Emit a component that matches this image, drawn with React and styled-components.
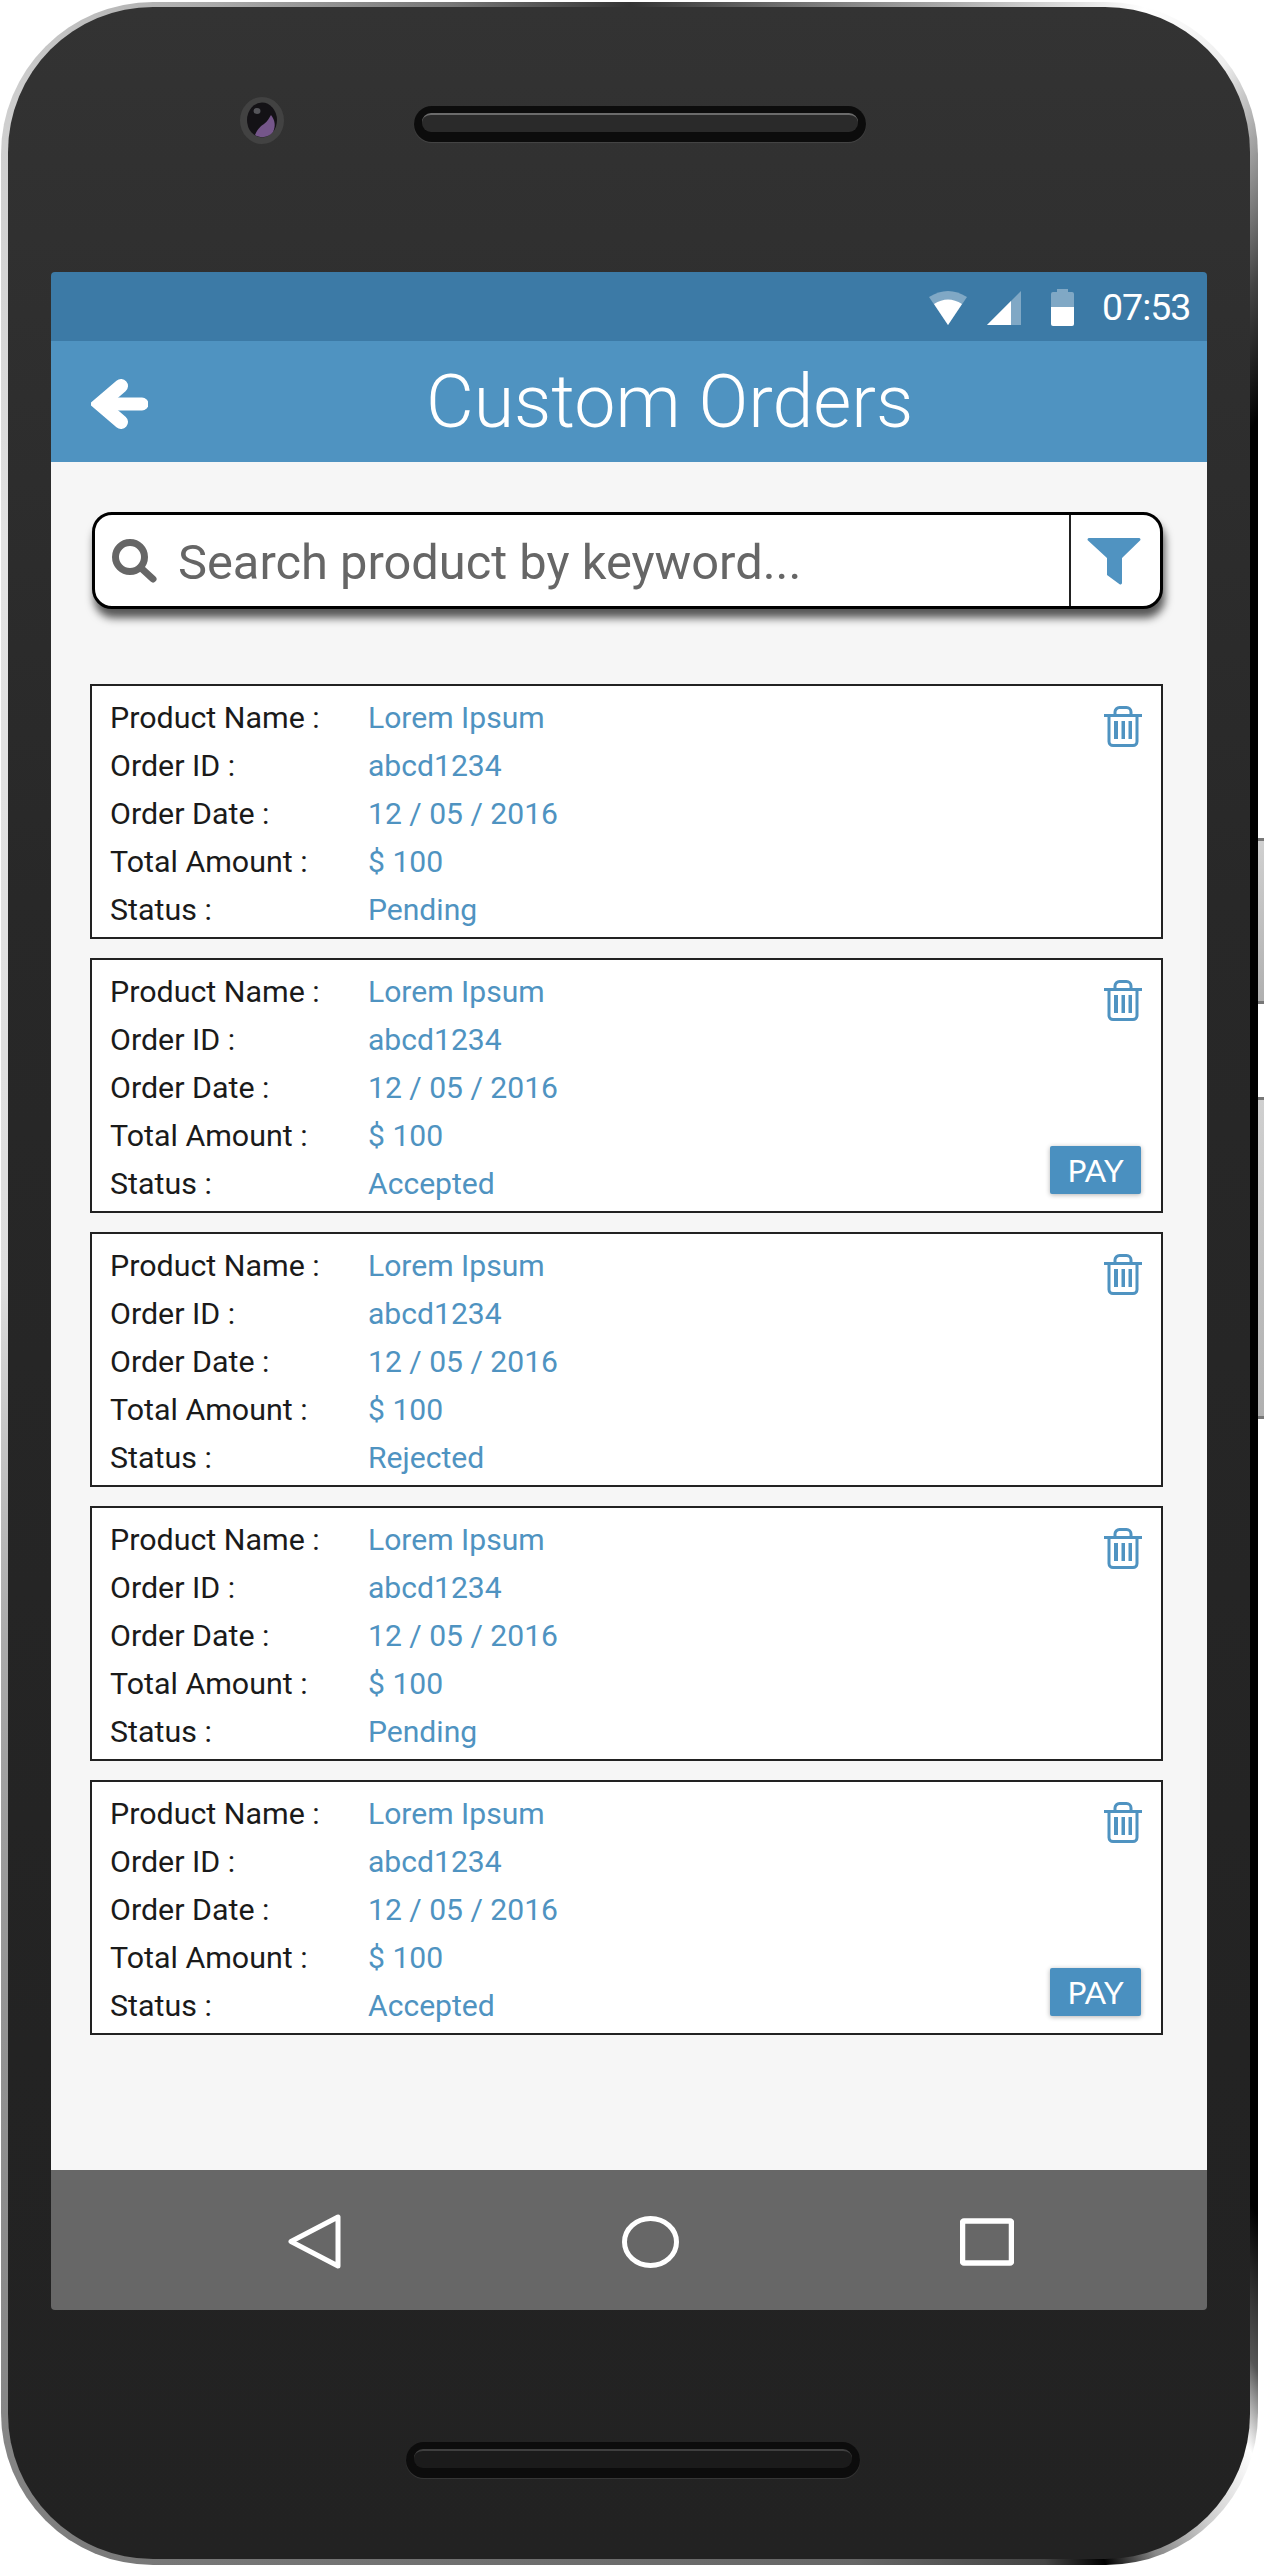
import React from "react";
import styled, { createGlobalStyle } from "styled-components";

const Global = createGlobalStyle`
  html, body { margin: 0; padding: 0; background: #fff; }
  body { font-family: Roboto, "Liberation Sans", sans-serif; }
  #root { width: 1264px; height: 2573px; overflow: hidden; }
`;

const Page = styled.div`
  padding: 2px 0 0 1px;
`;

const Frame = styled.div`
  position: relative;
  width: 1257px;
  height: 2563px;
  box-sizing: border-box;
  padding: 5px 8px 6px 7px;
  border-radius: 152px;
  background: conic-gradient(
    #333 0deg, #555 4deg, #aaa 14deg, #fff 22deg, #eee 26deg, #999 29deg, #444 32deg, #000 36deg,
    #000 146deg, #555 150deg, #fff 152deg, #ccc 155deg, #888 157.5deg, #000 159.6deg, #444 162deg,
    #666 170deg, #777 200deg, #888 210deg, #aaa 240deg, #ddd 270deg, #e2e2e2 320deg, #ccc 333deg,
    #aaa 342deg, #777 352deg, #333 360deg
  );
`;

const SideKey = styled.div`
  position: absolute;
  left: 100%;
  top: ${(p) => p.$top}px;
  width: 6px;
  height: ${(p) => p.$height}px;
  background: linear-gradient(#d0d0d0, #b0b0b0);
  border-top: 3px solid #777;
  border-bottom: 3px solid #777;
`;

const Body = styled.div`
  height: 100%;
  display: flex;
  flex-direction: column;
  border-radius: 145px;
  background: linear-gradient(#333 0%, #2f2f2f 12%, #282828 35%, #232323 80%, #222 100%);
`;

const TopBezel = styled.div`
  height: 265px;
  box-sizing: border-box;
  flex: none;
  display: flex;
  align-items: flex-start;
  padding: 90px 0 0 232px;
  gap: 130px;
`;

const Camera = styled.svg`
  width: 44px;
  height: 47px;
  flex: none;
`;

const Speaker = styled.div`
  width: ${(p) => p.$width}px;
  height: 36px;
  flex: none;
  box-sizing: border-box;
  margin-top: 9px;
  padding: 7px 8px 10px;
  border-radius: 18px;
  background: #0c0c0c;
  box-shadow: 0 1px 1px rgba(255, 255, 255, 0.1);
`;

const SpeakerGrille = styled.div`
  height: 100%;
  box-sizing: border-box;
  border-radius: 9px;
  background: ${(p) => (p.$dim ? "#1b1b1b" : "#2a2a2a")};
  border-top: 2px solid ${(p) => (p.$dim ? "#3f3f3f" : "#6b6b6b")};
`;

const Screen = styled.div`
  flex: none;
  margin: 0 43px 0 43px;
  border-radius: 4px;
  overflow: hidden;
  display: flex;
  flex-direction: column;
`;

const StatusBar = styled.div`
  height: 69px;
  display: flex;
  align-items: center;
  justify-content: flex-end;
  padding-right: 17px;
  background: #3c7aa6;
  color: #fff;
`;

const StatusIcon = styled.svg`
  flex: none;
  margin-right: ${(p) => p.$gap}px;
  margin-top: 2px;
`;

const Clock = styled.span`
  font-size: 37.5px;
  letter-spacing: -1px;
  line-height: 1;
  width: 88px;
  white-space: nowrap;
  margin-top: 2px;
`;

const AppBar = styled.div`
  height: 121px;
  display: flex;
  align-items: center;
  padding-left: 40px;
  background: #4f93c1;
  color: #fff;
`;

const BackArrow = styled.svg`
  width: 57px;
  height: 52px;
  flex: none;
  margin-top: 4px;
`;

const Title = styled.h1`
  margin: 2px 0 0 278px;
  font-size: 73.5px;
  font-weight: 300;
  line-height: 1;
  white-space: nowrap;
`;

const Content = styled.div`
  height: 1708px;
  box-sizing: border-box;
  padding: 50px 44px 0 39px;
  background: #f6f6f6;
`;

const SearchBar = styled.div`
  height: 97px;
  margin-left: 2px;
  box-sizing: border-box;
  display: flex;
  align-items: center;
  border: 3px solid #000;
  border-radius: 20px;
  background: #fff;
  box-shadow: 2px 9px 9px rgba(0, 0, 0, 0.65);
`;

const SearchIcon = styled.svg`
  width: 45px;
  height: 44px;
  flex: none;
  margin-left: 17px;
`;

const SearchText = styled.div`
  flex: 1;
  margin: 3px 0 0 21px;
  font-size: 48.8px;
  color: #666;
  white-space: nowrap;
`;

const FilterCell = styled.div`
  width: 91px;
  align-self: stretch;
  flex: none;
  box-sizing: border-box;
  border-left: 2px solid #222;
  display: flex;
  align-items: center;
  padding-left: 16px;
`;

const FilterIcon = styled.svg`
  width: 54px;
  height: 47px;
  margin-top: 2px;
`;

const OrderList = styled.div`
  margin-top: 75px;
  display: flex;
  flex-direction: column;
  gap: 19px;
`;

const OrderCard = styled.div`
  height: 255px;
  box-sizing: border-box;
  display: flex;
  justify-content: space-between;
  border: 2px solid #222;
  background: #fff;
  padding: 7px 19px 17px 18px;
`;

const Fields = styled.div`
  display: grid;
  grid-template-columns: 258px auto;
  grid-auto-rows: 48px;
  align-items: center;
  align-content: start;
  font-size: 30.1px;
`;

const Label = styled.div`
  color: #1a1a1a;
  font-size: 30.4px;
  white-space: nowrap;
`;

const Value = styled.div`
  color: #4f93c1;
  white-space: nowrap;
`;

const Actions = styled.div`
  display: flex;
  flex-direction: column;
  justify-content: space-between;
  align-items: flex-end;
  padding-top: 13px;
`;

const TrashIcon = styled.svg`
  width: 38px;
  height: 41px;
`;

const PayButton = styled.button`
  width: 91px;
  height: 48px;
  margin-right: 1px;
  padding: 0;
  border: none;
  border-radius: 2px;
  background: #4a90c0;
  color: #fff;
  font-family: Lato, "Open Sans", sans-serif;
  font-size: 31.5px;
  box-shadow: 0 1px 5px rgba(0, 0, 0, 0.3);
`;

const NavBar = styled.div`
  height: 140px;
  box-sizing: border-box;
  display: flex;
  align-items: center;
  gap: 281px;
  padding: 3px 0 0 237px;
  background: #676767;
`;

const NavIcon = styled.svg`
  flex: none;
`;

const BottomBezel = styled.div`
  flex: 1;
  display: flex;
  padding: 123px 0 0 398px;
`;

const orders = [
  { status: "Pending" },
  { status: "Accepted", pay: true },
  { status: "Rejected" },
  { status: "Pending" },
  { status: "Accepted", pay: true },
];

const Trash = () => (
  <TrashIcon viewBox="0 0 38 41">
    <g fill="none" stroke="#4f93c1" strokeWidth="3">
      <path d="M0 9.5H38" />
      <path d="M11 9V6a4.5 4.5 0 0 1 4.5-4.5h7A4.5 4.5 0 0 1 27 6v3" />
      <path d="M5 10V35.5a4 4 0 0 0 4 4h20a4 4 0 0 0 4-4V10" />
    </g>
    <g fill="#4f93c1">
      <rect x="10" y="15" width="4" height="18" />
      <rect x="17.5" y="15" width="3.5" height="18" />
      <rect x="24.5" y="15" width="3.5" height="18" />
    </g>
  </TrashIcon>
);

const Order = ({ status, pay }) => (
  <OrderCard>
    <Fields>
      <Label>Product Name :</Label>
      <Value>Lorem Ipsum</Value>
      <Label>Order ID :</Label>
      <Value>abcd1234</Value>
      <Label>Order Date :</Label>
      <Value>12 / 05 / 2016</Value>
      <Label>Total Amount :</Label>
      <Value>$ 100</Value>
      <Label>Status :</Label>
      <Value>{status}</Value>
    </Fields>
    <Actions>
      <Trash />
      {pay && <PayButton>PAY</PayButton>}
    </Actions>
  </OrderCard>
);

export default function App() {
  return (
    <Page>
      <Global />
      <Frame>
        <SideKey $top={836} $height={160} />
        <SideKey $top={1095} $height={316} />
        <Body>
          <TopBezel>
            <Camera viewBox="0 0 44 47">
              <ellipse cx="22" cy="23.5" rx="22" ry="23.5" fill="#424242" />
              <ellipse cx="22" cy="23" rx="15" ry="17.5" fill="#141216" />
              <path d="M15 38c3-7 6-9 9-11 4-3 5-6 7-9 4 5 5 11 2 17-4 5-12 7-18 3z" fill="#75568a" />
              <ellipse cx="17" cy="14" rx="3.5" ry="3" fill="#55555a" />
            </Camera>
            <Speaker $width={452}>
              <SpeakerGrille />
            </Speaker>
          </TopBezel>
          <Screen>
            <StatusBar>
              <StatusIcon $gap={20} width="38" height="34" viewBox="0 0 38 34">
                <path d="M19 34L0 6Q19 -6 38 6Z" fill="#fff" fillOpacity=".35" />
                <path d="M19 34L5 13Q19 4 33 13Z" fill="#fff" />
              </StatusIcon>
              <StatusIcon $gap={30} width="34" height="34" viewBox="0 0 34 34">
                <path d="M0 34L34 0V34Z" fill="#fff" fillOpacity=".35" />
                <path d="M0 34L24 10V34Z" fill="#fff" />
              </StatusIcon>
              <StatusIcon $gap={28} width="23" height="37" viewBox="0 0 23 37">
                <path d="M6 0H17V3H21a2 2 0 0 1 2 2V18H0V5a2 2 0 0 1 2-2H6Z" fill="#fff" fillOpacity=".35" />
                <path d="M0 18H23V35a2 2 0 0 1-2 2H2a2 2 0 0 1-2-2Z" fill="#fff" />
              </StatusIcon>
              <Clock>07:53</Clock>
            </StatusBar>
            <AppBar>
              <BackArrow viewBox="0 0 57 52">
                <g fill="none" stroke="#fff" strokeLinecap="round">
                  <path d="M30 8L9 26L30 44" strokeWidth="14" />
                  <path d="M20 26H51" strokeWidth="13" />
                </g>
              </BackArrow>
              <Title>Custom Orders</Title>
            </AppBar>
            <Content>
              <SearchBar>
                <SearchIcon viewBox="0 0 45 44">
                  <g fill="none" stroke="#666" strokeWidth="7">
                    <circle cx="18" cy="18" r="14.5" />
                    <path d="M29 29L41 40" strokeLinecap="round" />
                  </g>
                </SearchIcon>
                <SearchText>Search product by keyword...</SearchText>
                <FilterCell>
                  <FilterIcon viewBox="0 0 54 47">
                    <path d="M2 0H52a1.5 1.5 0 0 1 1 2.6L35 20V45a1.5 1.5 0 0 1-2.4 1.2L20 37V20L1 2.6A1.5 1.5 0 0 1 2 0Z" fill="#5093c1" />
                  </FilterIcon>
                </FilterCell>
              </SearchBar>
              <OrderList>
                {orders.map((o, i) => (
                  <Order key={i} status={o.status} pay={o.pay} />
                ))}
              </OrderList>
            </Content>
            <NavBar>
              <NavIcon width="53" height="55" viewBox="0 0 53 55">
                <path d="M50 3V52L3 27.5Z" fill="none" stroke="#fff" strokeWidth="5" strokeLinejoin="round" />
              </NavIcon>
              <NavIcon width="57" height="52" viewBox="0 0 57 52">
                <ellipse cx="28.5" cy="26" rx="26" ry="23.5" fill="none" stroke="#fff" strokeWidth="5" />
              </NavIcon>
              <NavIcon width="54" height="48" viewBox="0 0 54 48">
                <rect x="2.5" y="3" width="49" height="42" rx="1.5" fill="none" stroke="#fff" strokeWidth="5.5" />
              </NavIcon>
            </NavBar>
          </Screen>
          <BottomBezel>
            <Speaker $width={454}>
              <SpeakerGrille $dim />
            </Speaker>
          </BottomBezel>
        </Body>
      </Frame>
    </Page>
  );
}
